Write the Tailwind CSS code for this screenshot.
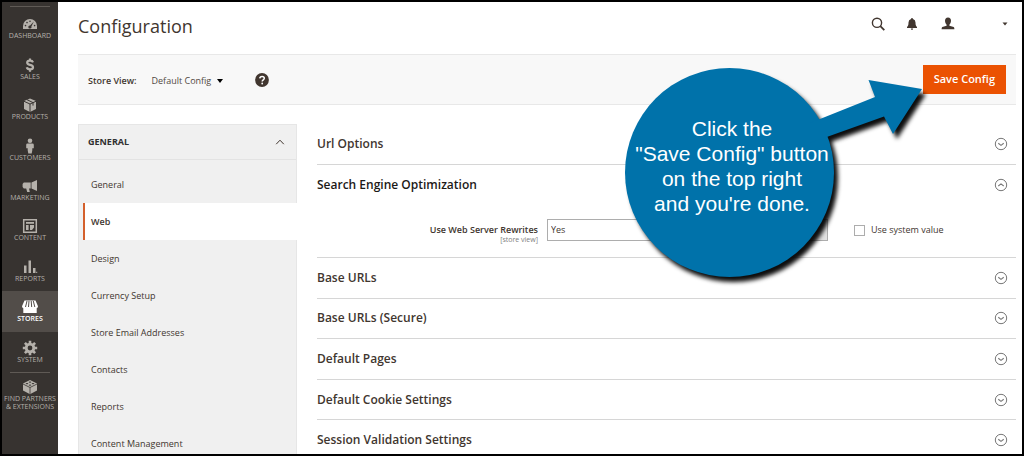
<!DOCTYPE html>
<html lang="en">
<head>
<meta charset="utf-8">
<title>Configuration</title>
<script src="https://cdn.jsdelivr.net/npm/@tailwindcss/browser@4"></script>
</head>
<body class="relative flex h-screen overflow-hidden border-2 border-black bg-white font-['Open_Sans','Noto_Sans',sans-serif] text-[#41362f]">

<svg class="hidden" aria-hidden="true">
  <symbol id="down" viewBox="0 0 14 14"><circle cx="7" cy="7" r="5.7" fill="none" stroke="#777" stroke-width="1"/><path d="M4.3 6.3 7 8.4l2.7-2.1" fill="none" stroke="#777" stroke-width="1.1"/></symbol>
  <symbol id="up" viewBox="0 0 14 14"><circle cx="7" cy="7" r="5.7" fill="none" stroke="#777" stroke-width="1"/><path d="M4.3 8 7 5.9 9.7 8" fill="none" stroke="#777" stroke-width="1.1"/></symbol>
</svg>

<!-- Main navigation -->
<nav class="w-14 shrink-0 bg-[#373330] text-center text-[7px] leading-[8px] text-[#b5b1ab]">
  <div class="mx-2 mt-1 border-t border-[#5f5a55]"></div>
  <ul class="mt-px grid h-[364px] auto-rows-fr">
    <li><a href="#" class="flex h-full flex-col items-center justify-center">
      <svg class="h-4 w-4" viewBox="0 0 16 16" fill="currentColor"><path d="M1 13V10a7 7 0 0 1 14 0v3z"/><g fill="#373330"><circle cx="3.5" cy="9.6" r=".8"/><circle cx="5" cy="6.6" r=".8"/><circle cx="8" cy="5.2" r=".8"/><circle cx="12.6" cy="9.6" r=".8"/><path d="M11.8 5.6 9.4 10.4a1.6 1.6 0 1 1-1.3-1z"/></g></svg>DASHBOARD</a></li>
    <li><a href="#" class="flex h-full flex-col items-center justify-center">
      <svg class="h-4 w-4" viewBox="0 0 16 16" fill="none" stroke="currentColor" stroke-width="2.2"><path d="M11 5.400C10.600 4.200 9.500 3.700 8 3.700c-1.700 0-2.800.7-2.800 2C5.200 8.700 11 7.100 11 10.200c0 1.400-1.200 2.100-3 2.100-1.700 0-2.900-.7-3.200-2M8 1.500v2.200M8 12.200v2.500"/></svg>SALES</a></li>
    <li><a href="#" class="flex h-full flex-col items-center justify-center">
      <svg class="h-4 w-4" viewBox="0 0 16 16" fill="currentColor"><path d="M8 1.500 14 4v8L8 15l-6-3V4z"/><path d="M2 4.300 8 7l6-2.700M8 7v8M5 2.700l6 2.900v3" fill="none" stroke="#373330" stroke-width="1"/></svg>PRODUCTS</a></li>
    <li><a href="#" class="flex h-full flex-col items-center justify-center">
      <svg class="h-4 w-4" viewBox="0 0 16 16" fill="currentColor"><circle cx="8" cy="2.700" r="2.300"/><path d="M5.600 5.400h4.800q1.400 0 1.400 1.400v3.400h-1.500v2L9.700 15.600H6.300L5.700 12.200v-2H4.200V6.800q0-1.400 1.400-1.400z"/></svg>CUSTOMERS</a></li>
    <li><a href="#" class="flex h-full flex-col items-center justify-center">
      <svg class="h-4 w-4" viewBox="0 0 16 16" fill="currentColor"><path d="M15 2v11L9.500 10.600V4.400zM8.700 4.600v5.800H7l.8 3.600H5.200l-1-3.600H1.800L.6 9V6l1.200-1.400z"/></svg>MARKETING</a></li>
    <li><a href="#" class="flex h-full flex-col items-center justify-center">
      <svg class="h-4 w-4" viewBox="0 0 16 16" fill="none" stroke="currentColor"><path d="M1.700 1.700h12.600v12.600H1.700z" stroke-width="1.500"/><path d="M4 4.900h8" stroke-width="1.800"/><path d="M4 7h2.600v5H4zM8 7h4v2.600l-2 2.400H8z" fill="currentColor" stroke="none"/></svg>CONTENT</a></li>
    <li><a href="#" class="flex h-full flex-col items-center justify-center">
      <svg class="h-4 w-4" viewBox="0 0 16 16" fill="currentColor"><path d="M2 6.500h2.500V14H2zM6.500 1.500H9V14H6.500zM11 9h2.500v5H11zM14.200 12.700h1V14h-1z"/></svg>REPORTS</a></li>
    <li class="bg-[#524d49] font-semibold text-white"><a href="#" aria-current="page" class="flex h-full flex-col items-center justify-center">
      <svg class="h-4 w-4" viewBox="0 0 16 16" fill="currentColor"><path d="M2.500 1.500h11L16 7.300q0 1.700-1.300 2V14H1.300V9.300Q0 9 0 7.300z"/><path d="M5 2 3.500 8M7 2l-.5 6M9.200 2l.5 6M11.300 2l1.500 6" fill="none" stroke="#524d49"/></svg>STORES</a></li>
    <li><a href="#" class="flex h-full flex-col items-center justify-center">
      <svg class="h-4 w-4" viewBox="0 0 16 16" fill="none" stroke="currentColor"><circle cx="8" cy="8" r="3.800" stroke-width="2.800"/><path d="M8 .8v3M8 12.200v3M.8 8h3M12.200 8h3M2.900 2.900 5 5M11 11l2.100 2.100M2.900 13.100 5 11M11 5l2.100-2.100" stroke-width="2.600"/></svg>SYSTEM</a></li>
  </ul>
  <div class="mx-2 border-t border-[#5f5a55]"></div>
  <a href="#" class="mt-1.5 flex flex-col items-center whitespace-nowrap">
    <svg class="h-4 w-4" viewBox="0 0 16 16" fill="currentColor"><path d="M8 1l7 3.500v7L8 15.300l-7-3.800v-7z"/><path d="M1 5l7 3.500L15 5M8 8.500v7" fill="none" stroke="#373330" stroke-width=".8"/><g fill="#373330"><ellipse cx="8" cy="3.100" rx="1.300" ry=".6"/><ellipse cx="5" cy="4.600" rx="1.300" ry=".6"/><ellipse cx="11" cy="4.600" rx="1.300" ry=".6"/><ellipse cx="8" cy="6.100" rx="1.300" ry=".6"/></g></svg>
    <span>FIND PARTNERS</span><span>&amp; EXTENSIONS</span></a>
</nav>

<div class="min-w-0 flex-1 pr-1.5 pl-5">
  <!-- Page header -->
  <header class="mb-1 flex h-12 items-center justify-between pr-2">
    <h1 class="text-[18px] leading-6">Configuration</h1>
    <div class="flex items-center pb-1">
      <button type="button" aria-label="Search" class="mr-[18px]"><svg class="h-4 w-4" viewBox="0 0 16 16" fill="none" stroke="#41362f"><circle cx="7" cy="6.800" r="4.600" stroke-width="1.400"/><path d="m10.300 10.200 4 4" stroke-width="1.800"/></svg></button>
      <button type="button" aria-label="Notifications" class="mr-5"><svg class="h-4 w-4" viewBox="0 0 16 16" fill="#41362f"><path d="M8 2q.9 0 1 .9 2.500.8 2.500 3.600c0 2.500.4 3.600 1.500 4.500v1H3v-1c1.100-.9 1.500-2 1.500-4.500q0-2.800 2.500-3.600Q7.100 2 8 2zM6.800 12.500h2.400q-.2 1.400-1.200 1.400t-1.200-1.400z"/></svg></button>
      <button type="button" aria-label="Account" class="flex items-center gap-[46px]"><svg class="h-4 w-4" viewBox="0 0 16 16" fill="#41362f"><path d="M8 1.500c2 0 3 1.400 3 3.300S10 8.100 9.400 8.800v1l4.300 1.300q.7.400.7 2.100H1.600q0-1.700.7-2.100l4.300-1.300v-1C6 8.100 5 6.700 5 4.800s1-3.300 3-3.300z"/></svg><svg class="h-1 w-1.5" viewBox="0 0 6 4" fill="#41362f"><path d="M.5.5h5L3 3.500z"/></svg></button>
    </div>
  </header>

  <!-- Scope and save bar -->
  <div class="flex h-[51px] items-center border-y border-[#e8e8e8] bg-[#f8f8f8] pr-2.5 pl-2.5 text-[9px]">
    <span class="pt-0.5 font-semibold">Store View:</span>
    <button type="button" class="ml-[15px] flex items-center gap-1.5 pt-0.5 text-[#514943]">Default Config<svg class="h-1 w-1.5" viewBox="0 0 6 4"><path d="M0 0h6L3 4z"/></svg></button>
    <button type="button" aria-label="Help" class="ml-8"><svg class="h-3.5 w-3.5" viewBox="0 0 14 14"><circle cx="7" cy="7" r="6.900" fill="#41362f"/><path d="M4.800 5.400C4.900 4 5.800 3.400 7.100 3.400c1.200 0 2.200.7 2.200 1.900C9.300 6.800 7.200 6.800 7.200 8.500" fill="none" stroke="#fff" stroke-width="1.500"/><circle cx="7.200" cy="10.500" r=".9" fill="#fff"/></svg></button>
    <button type="button" class="ml-auto h-[29px] bg-[#eb5202] px-[11px] text-[11px] font-semibold text-white">Save Config</button>
  </div>

  <div class="mt-[19px] flex items-start gap-5">
    <!-- Configuration menu -->
    <nav class="w-[219px] shrink-0 border border-[#e6e6e6] bg-[#f0f0f0] text-[9px]">
      <button type="button" class="flex h-[35px] w-full items-center justify-between border-b border-[#e3e3e3] pr-[11px] pl-[9px] font-bold text-[#303030]">GENERAL<svg class="h-2 w-2.5" viewBox="0 0 10 8" fill="none" stroke="#41362f"><path d="M1.200 6.200 5 2.200l3.800 4"/></svg></button>
      <ul class="mt-1.5 -mr-px ml-1 *:h-[37px]">
        <li><a href="#" class="flex h-full items-center pl-2">General</a></li>
        <li><a href="#" aria-current="page" class="flex h-full items-center border-l-2 border-[#d4602c] bg-white pl-1.5 font-semibold">Web</a></li>
        <li><a href="#" class="flex h-full items-center pl-2">Design</a></li>
        <li><a href="#" class="flex h-full items-center pl-2">Currency Setup</a></li>
        <li><a href="#" class="flex h-full items-center pl-2">Store Email Addresses</a></li>
        <li><a href="#" class="flex h-full items-center pl-2">Contacts</a></li>
        <li><a href="#" class="flex h-full items-center pl-2">Reports</a></li>
        <li><a href="#" class="flex h-full items-center pl-2">Content Management</a></li>
      </ul>
    </nav>

    <!-- Settings sections -->
    <main class="min-w-0 flex-1 text-[12px] font-semibold">
      <button type="button" class="flex h-[41px] w-full items-center justify-between border-b border-[#d6d6d6] pr-2">Url Options<svg class="h-3.5 w-3.5"><use href="#down"/></svg></button>
      <section class="h-[93px] border-b border-[#d6d6d6]">
        <button type="button" class="flex h-10 w-full items-center justify-between pr-2 text-[#1c1917]">Search Engine Optimization<svg class="h-3.5 w-3.5"><use href="#up"/></svg></button>
        <div class="mt-[14px] flex items-start text-[9px]">
          <label for="rewrites" class="mt-[5px] w-[221px] text-right leading-3">Use Web Server Rewrites<span class="block text-[7px] leading-[7px] font-normal text-[#808080]">[store view]</span></label>
          <select id="rewrites" class="ml-[9px] h-[22px] w-[281px] appearance-none border border-[#adadad] bg-white bg-linear-to-l from-[#e3e3e3] from-8% to-white to-8% px-[3px] font-normal"><option>Yes</option></select>
          <label class="ml-[26px] flex h-[22px] items-center gap-1.5 font-normal"><input type="checkbox" class="h-[11px] w-[11px] appearance-none border border-[#adadad] bg-white">Use system value</label>
        </div>
      </section>
      <div class="grid h-[203px] auto-rows-fr">
        <button type="button" class="flex items-center justify-between border-b border-[#d6d6d6] pr-2">Base URLs<svg class="h-3.5 w-3.5"><use href="#down"/></svg></button>
        <button type="button" class="flex items-center justify-between border-b border-[#d6d6d6] pr-2">Base URLs (Secure)<svg class="h-3.5 w-3.5"><use href="#down"/></svg></button>
        <button type="button" class="flex items-center justify-between border-b border-[#d6d6d6] pr-2">Default Pages<svg class="h-3.5 w-3.5"><use href="#down"/></svg></button>
        <button type="button" class="flex items-center justify-between border-b border-[#d6d6d6] pr-2">Default Cookie Settings<svg class="h-3.5 w-3.5"><use href="#down"/></svg></button>
        <button type="button" class="flex items-center justify-between border-b border-[#d6d6d6] pr-2">Session Validation Settings<svg class="h-3.5 w-3.5"><use href="#down"/></svg></button>
      </div>
    </main>
  </div>
</div>

<!-- Callout pointing at the save button -->
<div class="pointer-events-none absolute top-[58px] right-[82px] h-[240px] w-[320px]">
  <svg class="absolute inset-0 h-full w-full overflow-visible drop-shadow-[4px_5px_2px_rgba(0,0,0,0.95)]" viewBox="0 0 320 240" fill="#0072aa">
    <circle cx="109.500" cy="112.500" r="104.500"/>
    <path d="M190 63 255 37l-6.500-17L302 29l-29 45-9-17.500L190 83z"/>
  </svg>
  <p class="absolute top-[56px] left-[7px] w-[210px] text-center font-['Liberation_Sans',Arial,sans-serif] text-[21px] leading-[25px] text-white">Click the<br>"Save Config" button<br>on the top right<br>and you're done.</p>
</div>
</body>
</html>
